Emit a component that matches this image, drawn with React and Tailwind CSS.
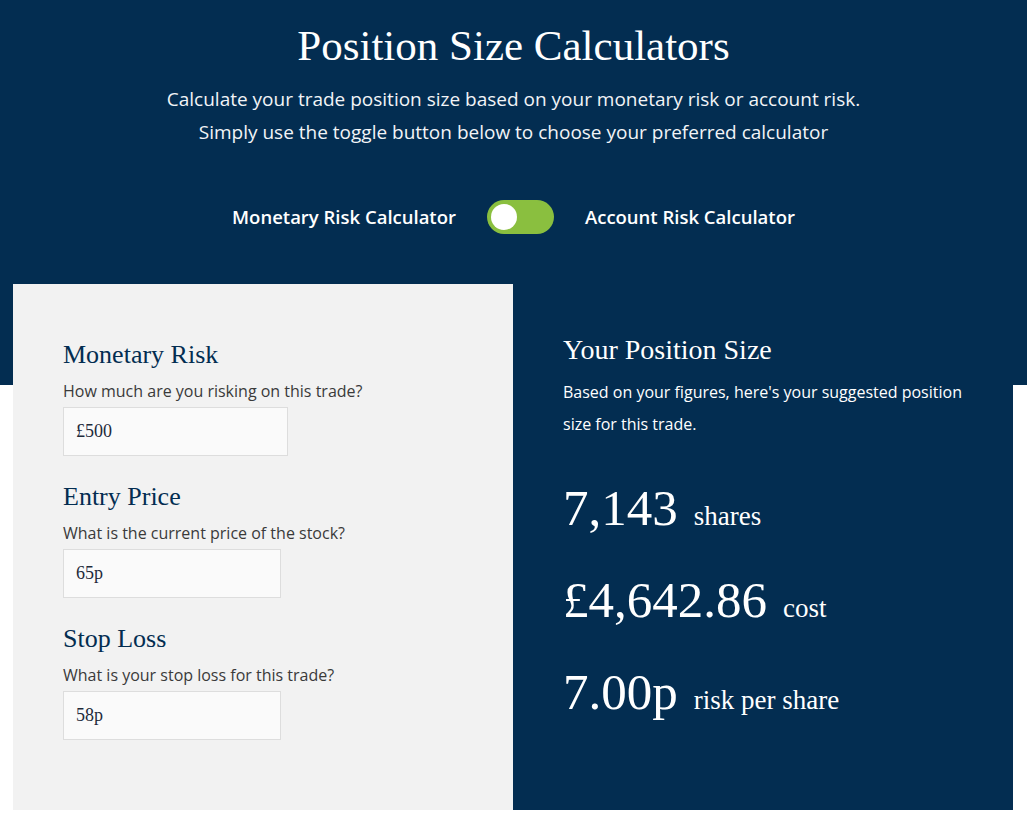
import React from 'react';

const serif = "font-['Liberation_Serif',serif]";

function Field({ title, label, value, width }) {
  return (
    <div className="mb-[25px]">
      <h3 className={`${serif} text-[26px] leading-[32px] text-[#032d51]`}>{title}</h3>
      <p className="mt-[9px] text-[16px] leading-[22px] text-[#3a3a3a]">{label}</p>
      <div
        className={`${width} mt-[5px] h-[49px] border border-[#dddddd] bg-[#fafafa] flex items-center px-[12px] ${serif} text-[18px] text-[#1e2a3a]`}
      >
        {value}
      </div>
    </div>
  );
}

function Result({ value, unit }) {
  return (
    <div className="flex items-baseline gap-[16px] h-[92px]">
      <span className={`${serif} text-[51px] leading-[60px]`}>{value}</span>
      <span className={`${serif} text-[27px]`}>{unit}</span>
    </div>
  );
}

export default function App() {
  return (
    <div className="min-h-[821px] bg-white font-['Open_Sans',sans-serif]">
      <div className="bg-[#032d51] h-[385px] flex flex-col items-center pt-[21px] text-white">
        <h1 className={`${serif} text-[43px] leading-[50px]`}>Position Size Calculators</h1>
        <p className="mt-[12px] text-[19px] leading-[33px] text-center text-[#f2f4f7]">
          Calculate your trade position size based on your monetary risk or account risk.
          <br />
          Simply use the toggle button below to choose your preferred calculator
        </p>
        <div className="mt-[51px] flex items-center gap-[31px] text-[18.5px] font-semibold">
          <span>Monetary Risk Calculator</span>
          <div className="w-[67px] h-[34px] rounded-full bg-[#8abf3f] flex items-center px-[4px]">
            <div className="w-[26px] h-[26px] rounded-full bg-white" />
          </div>
          <span>Account Risk Calculator</span>
        </div>
      </div>

      <div className="mx-[13px] -mt-[101px] w-[1000px] h-[526px] flex">
        <div className="w-[500px] bg-[#f2f2f2] pl-[50px] pt-[55px]">
          <Field title="Monetary Risk" label="How much are you risking on this trade?" value="£500" width="w-[225px]" />
          <Field title="Entry Price" label="What is the current price of the stock?" value="65p" width="w-[218px]" />
          <Field title="Stop Loss" label="What is your stop loss for this trade?" value="58p" width="w-[218px]" />
        </div>
        <div className="w-[500px] bg-[#032d51] pl-[50px] pr-[40px] pt-[48px] text-white">
          <h3 className={`${serif} text-[28px] leading-[36px]`}>Your Position Size</h3>
          <p className="mt-[8px] text-[16px] leading-[32px]">
            Based on your figures, here's your suggested position size for this trade.
          </p>
          <div className="mt-[38px]">
            <Result value="7,143" unit="shares" />
            <Result value="£4,642.86" unit="cost" />
            <Result value="7.00p" unit="risk per share" />
          </div>
        </div>
      </div>
    </div>
  );
}
